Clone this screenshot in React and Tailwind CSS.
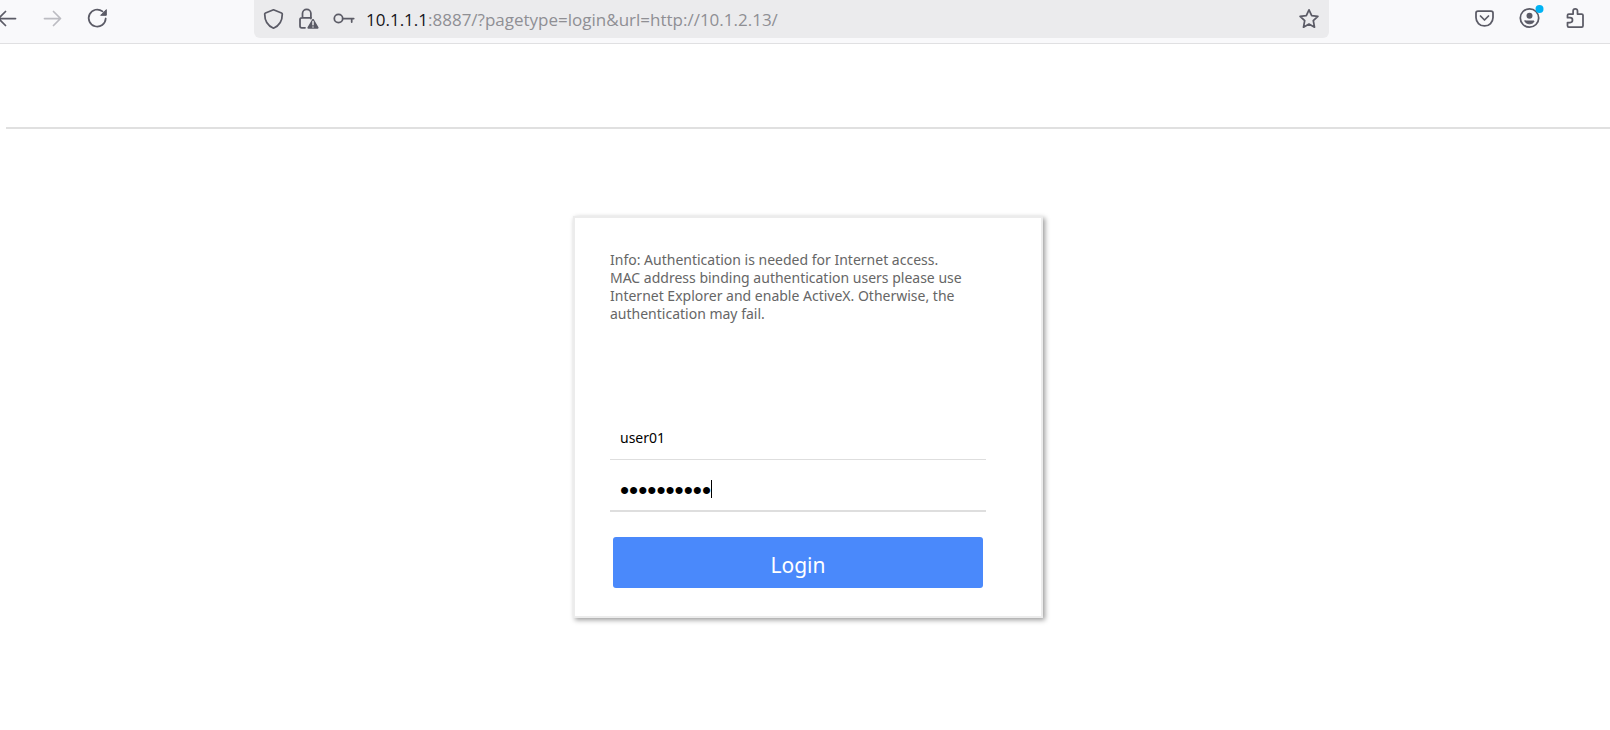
import React from "react";

const stroke = {
  fill: "none",
  stroke: "currentColor",
  strokeWidth: 1.75,
  strokeLinecap: "round",
  strokeLinejoin: "round",
};

function Icon({ children }) {
  return (
    <svg viewBox="0 0 24 24" className="block size-6 shrink-0 overflow-visible" aria-hidden="true" {...stroke}>
      {children}
    </svg>
  );
}

function IconButton({ label, className = "", children, ...rest }) {
  return (
    <button type="button" aria-label={label} className={`relative block size-6 shrink-0 ${className}`} {...rest}>
      <Icon>{children}</Icon>
    </button>
  );
}

function Toolbar() {
  return (
    <header className="flex h-11 items-start border-b border-[#e0e0e2] bg-[#f9f9fb] text-[#5b5b66]">
      <nav aria-label="Navigation" className="flex w-[254px] shrink-0 gap-5 pt-1.5">
        <IconButton label="Back" className="-ml-2">
          <path d="M23.500 12.500H7M13.500 5.500l-7 7 7 7" />
        </IconButton>
        <IconButton label="Forward" className="text-[#bcbcc2]" disabled>
          <path d="M8.500 12.500H24M17.500 5.500l7 7-7 7" />
        </IconButton>
        <IconButton label="Reload" className="ml-1">
          <path d="M21.700 12.500a8.500 8.500 0 1 1-3.200-7.100" />
          <path d="M22.300 4v5.300H17z" fill="currentColor" strokeWidth="1" />
        </IconButton>
      </nav>

      <div className="flex h-[38px] min-w-0 flex-1 items-center rounded-b-md bg-[#ebebed] px-2 text-[#5b5b66]">
        <div className="flex shrink-0 gap-2.5">
          <IconButton label="Tracking protection">
            <path d="M11.500 2.800 19.500 6c.5.200.8.600.8 1.100 0 6.400-2.600 11.700-8.800 14.100C5.300 18.800 2.700 13.500 2.700 7.100c0-.5.3-.9.8-1.100z" />
          </IconButton>
          <IconButton label="Connection not secure">
            <path d="M9 20.800H5.800A1.800 1.800 0 0 1 4 19v-6.400a1.800 1.800 0 0 1 1.800-1.800h9.400M6.500 10.800V6.500a4.200 4.200 0 0 1 8.400 0v5" />
            <path d="m17 12.800 4.700 8h-9.400z" fill="currentColor" />
            <path d="M17 14.500v3.200M17 20v.1" stroke="#ebebed" strokeWidth="1.500" />
          </IconButton>
          <IconButton label="Saved passwords">
            <circle cx="8.500" cy="11.500" r="4.200" />
            <path d="M12.700 11.500h11M21.700 11.500v3.500" />
          </IconButton>
        </div>
        <p className="ml-3 min-w-0 flex-1 truncate pt-0.5 font-['Open_Sans',sans-serif] text-[17px] leading-6 text-[#8f8f94]">
          <span className="text-[#15141a]">10.1.1.1</span>:8887/?pagetype=login&amp;url=http://10.1.2.13/
        </p>
        <IconButton label="Bookmark this page">
          <path d="m12 2.800 2.700 5.900 6.200.7-4.600 4.300 1.200 6.500-5.500-3.100-5.500 3.100 1.200-6.500-4.600-4.300 6.200-.7z" />
        </IconButton>
      </div>

      <nav aria-label="Tools" className="flex w-[281px] shrink-0 justify-end gap-[22px] pr-5.5 pt-1.5">
        <IconButton label="Save to Pocket">
          <path d="M6 5h13a2 2 0 0 1 2 2v4.500a8.500 8.500 0 0 1-17 0V7a2 2 0 0 1 2-2zM8.500 10l4 4 4-4" />
        </IconButton>
        <IconButton label="Account">
          <circle cx="11.500" cy="12" r="9.200" />
          <circle cx="11.500" cy="9.700" r="3" fill="currentColor" stroke="none" />
          <path d="M7 15h9c0 1.300-1.800 2.800-4.500 2.800S7 16.300 7 15z" fill="currentColor" strokeWidth="1" />
          <circle cx="21.500" cy="3" r="4" fill="#00b3f4" stroke="none" />
        </IconButton>
        <IconButton label="Extensions">
          <path d="M3.500 16.500v3.200A1.300 1.300 0 0 0 4.800 21h12.900a1.300 1.300 0 0 0 1.300-1.300V9.300A1.300 1.300 0 0 0 17.700 8h-4.200V5a2.200 2.200 0 0 0-4.400 0v3H4.800A1.300 1.300 0 0 0 3.500 9.300v2.400h2.600a2.400 2.400 0 0 1 0 4.800z" />
        </IconButton>
      </nav>
    </header>
  );
}

export default function App() {
  return (
    <div className="min-h-screen bg-white">
      <Toolbar />
      <div className="pl-1.5">
        <div className="h-[85px] border-b-2 border-[#e0e0e0]" />
        <main className="flex justify-center pt-[87px]">
          <form
            onSubmit={(e) => e.preventDefault()}
            className="w-full max-w-[470px] border-2 border-[#ececec] bg-white px-[35px] pb-7 pt-[33px] font-['Noto_Sans',sans-serif] text-sm shadow-[2px_2px_5px_rgba(0,0,0,0.4)]"
          >
            <p className="max-w-[376px] leading-[18px] text-[#666]">
              Info: Authentication is needed for Internet access.
              <br />
              MAC address binding authentication users please use
              <br />
              Internet Explorer and enable ActiveX. Otherwise, the
              <br />
              authentication may fail.
            </p>
            <div className="mt-[92px] max-w-[376px]">
              <input
                aria-label="User name"
                name="username"
                type="text"
                defaultValue="user01"
                className="block h-[45px] w-full border-b border-[#dedede] px-2.5 text-black outline-none"
              />
              <div className="relative mt-1.5">
                <input
                  aria-label="Password"
                  name="password"
                  type="password"
                  defaultValue="abcdefghij"
                  className="block h-[46px] w-full border-b-2 border-[#dedede] px-2.5 pt-1 font-['Liberation_Sans',sans-serif] text-[26px] text-black outline-none"
                />
                <span className="absolute left-[101px] top-3.5 h-[18px] w-px bg-black" />
              </div>
              <div className="px-[3px]">
                <button
                  type="submit"
                  className="mt-[25px] block h-[51px] w-full rounded-[3px] bg-[#4a89fb] pt-1 text-[21px] leading-6 text-white"
                >
                  Login
                </button>
              </div>
            </div>
          </form>
        </main>
      </div>
    </div>
  );
}
